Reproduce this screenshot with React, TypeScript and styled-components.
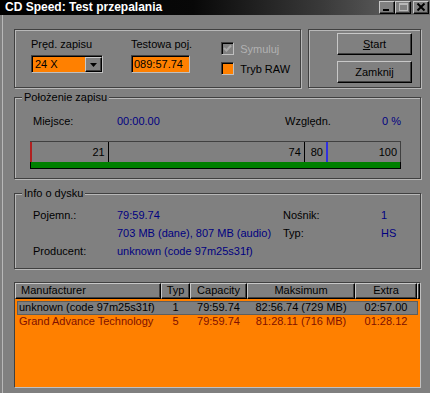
import styled, { createGlobalStyle } from 'styled-components';

const GlobalStyle = createGlobalStyle`
    html, body {
        margin: 0;
        padding: 0;
        background: #808080;
    }
    body {
        font-family: "Liberation Sans", Arial, sans-serif;
        font-size: 11px;
        color: #000;
    }
    * {
        box-sizing: border-box;
    }
`;

interface ScaleMark {
    value: number;
    blue?: boolean;
}

interface DiscRow {
    name: string;
    typ: string;
    capacity: string;
    max: string;
    extra: string;
    selected?: boolean;
}

const marks: ScaleMark[] = [
    { value: 21 },
    { value: 74 },
    { value: 80, blue: true },
    { value: 100 },
];

const discs: DiscRow[] = [
    {
        name: 'unknown (code 97m25s31f)',
        typ: '1',
        capacity: '79:59.74',
        max: '82:56.74 (729 MB)',
        extra: '02:57.00',
        selected: true,
    },
    {
        name: 'Grand Advance Technology',
        typ: '5',
        capacity: '79:59.74',
        max: '81:28.11 (716 MB)',
        extra: '01:28.12',
    },
];

const App = () => {
    return (
        <>
            <GlobalStyle />
            <Window>
                <TitleBar>
                    <Title>CD Speed: Test przepalania</Title>
                    <CaptionButtons>
                        <CaptionButton>
                            <svg width="10" height="9" viewBox="0 0 10 9">
                                <rect x="1" y="6" width="6" height="2" fill="#000" />
                            </svg>
                        </CaptionButton>
                        <CaptionButton>
                            <svg width="10" height="9" viewBox="0 0 10 9">
                                <rect x="1.5" y="0.5" width="8" height="7" fill="none" stroke="#b8b8b8" />
                                <rect x="1" y="1" width="9" height="1" fill="#b8b8b8" />
                            </svg>
                        </CaptionButton>
                        <CaptionButton $gap>
                            <svg width="10" height="9" viewBox="0 0 10 9">
                                <path d="M1.5 0.5 L8.5 7.5 M8.5 0.5 L1.5 7.5" stroke="#000" strokeWidth="2" />
                            </svg>
                        </CaptionButton>
                    </CaptionButtons>
                </TitleBar>
                <Body>
                    <TopRow>
                        <SettingsGroup>
                            <Field>
                                <FieldLabel>Pręd. zapisu</FieldLabel>
                                <Combo>
                                    <ComboText>24 X</ComboText>
                                    <ComboButton>
                                        <svg width="7" height="4" viewBox="0 0 7 4">
                                            <path d="M0 0 H7 L3.5 4 Z" fill="#000" />
                                        </svg>
                                    </ComboButton>
                                </Combo>
                            </Field>
                            <Field>
                                <FieldLabel>Testowa poj.</FieldLabel>
                                <TextBox>089:57.74</TextBox>
                            </Field>
                            <Checks>
                                <CheckRow $disabled>
                                    <CheckBox>
                                        <svg width="11" height="11" viewBox="0 0 11 11">
                                            <path d="M2 5 L4.5 7.5 L9 2.5" fill="none" stroke="#a8a8a8" strokeWidth="2" />
                                        </svg>
                                    </CheckBox>
                                    Symuluj
                                </CheckRow>
                                <CheckRow>
                                    <CheckBox $checked />
                                    Tryb RAW
                                </CheckRow>
                            </Checks>
                        </SettingsGroup>
                        <ActionsGroup>
                            <PushButton>
                                <u>S</u>tart
                            </PushButton>
                            <PushButton>Zamknij</PushButton>
                        </ActionsGroup>
                    </TopRow>

                    <PositionGroup>
                        <Legend>Położenie zapisu</Legend>
                        <InfoGrid $cols="84px 168px 97px 1fr" $row={14}>
                            <span>Miejsce:</span>
                            <Value>00:00.00</Value>
                            <span>Względn.</span>
                            <Value>0 %</Value>
                        </InfoGrid>
                        <Bar>
                            <Scale>
                                <StartMark />
                                {marks.map((m, i) => (
                                    <span key={`mark_${i}`}>
                                        <MarkLabel style={{ right: `calc(${100 - m.value}% + 3px)` }}>
                                            {m.value}
                                        </MarkLabel>
                                        {m.value < 100 && (
                                            <MarkLine $blue={m.blue} style={{ left: `${m.value}%` }} />
                                        )}
                                    </span>
                                ))}
                            </Scale>
                            <Track />
                        </Bar>
                    </PositionGroup>

                    <DiscGroup>
                        <Legend>Info o dysku</Legend>
                        <InfoGrid $cols="84px 166px 98px 1fr" $row={18}>
                            <span>Pojemn.:</span>
                            <Value>79:59.74</Value>
                            <span>Nośnik:</span>
                            <Value>1</Value>
                            <span />
                            <Value>703 MB (dane), 807 MB (audio)</Value>
                            <span>Typ:</span>
                            <Value>HS</Value>
                            <span>Producent:</span>
                            <Value>unknown (code 97m25s31f)</Value>
                        </InfoGrid>
                    </DiscGroup>

                    <ListView>
                        <ListHeader>
                            <HeaderCell $left>Manufacturer</HeaderCell>
                            <HeaderCell>Typ</HeaderCell>
                            <HeaderCell>Capacity</HeaderCell>
                            <HeaderCell>Maksimum</HeaderCell>
                            <HeaderCell>Extra</HeaderCell>
                            <HeaderCell />
                        </ListHeader>
                        <ListBody>
                            {discs.map((d, i) => (
                                <ListRow key={`disc_${i}`} $selected={d.selected}>
                                    <RowCell $left>{d.name}</RowCell>
                                    <RowCell>{d.typ}</RowCell>
                                    <RowCell>{d.capacity}</RowCell>
                                    <RowCell>{d.max}</RowCell>
                                    <RowCell>{d.extra}</RowCell>
                                </ListRow>
                            ))}
                        </ListBody>
                    </ListView>
                </Body>
            </Window>
        </>
    );
};

const Window = styled.div`
    width: 430px;
    height: 393px;
    overflow: hidden;
    background: #808080;
    display: flex;
    flex-direction: column;
`;

const TitleBar = styled.div`
    height: 15px;
    display: flex;
    align-items: flex-start;
    padding-left: 5px;
    background: linear-gradient(90deg, #000 0%, #080808 45%, #3a3a3a 75%, #6c6c6c 100%);
`;

const Title = styled.span`
    flex: 1;
    color: #fff;
    font-weight: bold;
    font-size: 12px;
    line-height: 15px;
`;

const CaptionButtons = styled.div`
    display: flex;
    padding: 1px 1px 0 0;
`;

const CaptionButton = styled.div<{ $gap?: boolean }>`
    width: 16px;
    height: 13px;
    margin-left: ${(p) => (p.$gap ? '2px' : '0')};
    background: #808080;
    border: 1px solid;
    border-color: #c8c8c8 #000 #000 #c8c8c8;
    box-shadow: inset -1px -1px 0 #404040;
    display: flex;
    align-items: center;
    justify-content: center;
`;

const Body = styled.div`
    flex: 1;
    margin-left: 2px;
    border-left: 1px solid #b8b8b8;
    padding: 14px 9px 0 11px;
    display: flex;
    flex-direction: column;
`;

const TopRow = styled.div`
    display: flex;
    gap: 7px;
    height: 59px;
`;

const GroupBox = styled.fieldset`
    margin: 0;
    min-width: 0;
    padding: 0;
    border: 1px solid #404040;
    box-shadow: inset 1px 1px 0 #b8b8b8, 1px 1px 0 #b8b8b8;
`;

const Legend = styled.legend`
    margin-left: 7px;
    padding: 0 2px;
    line-height: 13px;
    font-size: 11px;
    background: #808080;
`;

const SettingsGroup = styled(GroupBox)`
    width: 287px;
    display: flex;
    padding: 8px 0 0 16px;
`;

const Field = styled.div`
    display: flex;
    flex-direction: column;
    margin-right: 28px;
`;

const FieldLabel = styled.span`
    line-height: 13px;
    margin-bottom: 4px;
`;

const Sunken = styled.div`
    height: 18px;
    background: #ff8000;
    border: 1px solid;
    border-color: #404040 #c0c0c0 #c0c0c0 #404040;
    box-shadow: inset 1px 1px 0 #000;
`;

const Combo = styled(Sunken)`
    width: 72px;
    display: flex;
`;

const ComboText = styled.span`
    flex: 1;
    padding: 1px 0 0 3px;
    line-height: 15px;
`;

const ComboButton = styled.div`
    width: 17px;
    height: 15px;
    margin-top: 1px;
    background: #808080;
    border: 1px solid;
    border-color: #c8c8c8 #000 #000 #c8c8c8;
    box-shadow: inset -1px -1px 0 #404040;
    display: flex;
    align-items: center;
    justify-content: center;
`;

const TextBox = styled(Sunken)`
    width: 59px;
    padding: 1px 0 0 2px;
    line-height: 15px;
`;

const Checks = styled.div`
    display: flex;
    flex-direction: column;
    gap: 7px;
    padding-top: 4px;
    margin-left: 1px;
`;

const CheckRow = styled.div<{ $disabled?: boolean }>`
    display: flex;
    align-items: center;
    gap: 6px;
    height: 13px;
    color: ${(p) => (p.$disabled ? '#b2b2b2' : '#000')};
`;

const CheckBox = styled.div<{ $checked?: boolean }>`
    width: 13px;
    height: 13px;
    background: ${(p) => (p.$checked ? '#ff8000' : '#808080')};
    border: 1px solid;
    border-color: #404040 #c0c0c0 #c0c0c0 #404040;
    box-shadow: inset 1px 1px 0 #000;
    display: flex;
    align-items: center;
    justify-content: center;
`;

const ActionsGroup = styled(GroupBox)`
    flex: 1;
    display: flex;
    flex-direction: column;
    align-items: flex-end;
    gap: 6px;
    padding: 3px 8px 0 0;
`;

const PushButton = styled.button`
    width: 75px;
    height: 22px;
    padding: 0;
    background: #808080;
    font: inherit;
    font-size: 11px;
    color: #000;
    border: 1px solid;
    border-color: #c8c8c8 #000 #000 #c8c8c8;
    box-shadow: inset -1px -1px 0 #404040;
`;

const PositionGroup = styled(GroupBox)`
    margin-top: 3px;
    padding: 10px 0 9px 0;
`;

const DiscGroup = styled(GroupBox)`
    margin-top: 8px;
    padding: 6px 0 8px 0;
`;

const InfoGrid = styled.div<{ $cols: string; $row: number }>`
    display: grid;
    grid-template-columns: ${(p) => p.$cols};
    grid-auto-rows: ${(p) => p.$row}px;
    align-items: center;
    padding-left: 18px;
    white-space: nowrap;
`;

const Value = styled.span`
    color: #000080;
`;

const Bar = styled.div`
    width: 371px;
    margin: 13px 0 0 15px;
`;

const Scale = styled.div`
    position: relative;
    height: 21px;
    border-top: 1px solid #404040;
    border-right: 1px solid #404040;
`;

const StartMark = styled.div`
    position: absolute;
    left: 0;
    top: 0;
    bottom: 0;
    width: 2px;
    background: #b02020;
`;

const MarkLine = styled.div<{ $blue?: boolean }>`
    position: absolute;
    top: 0;
    bottom: 0;
    width: ${(p) => (p.$blue ? '2px' : '1px')};
    background: ${(p) => (p.$blue ? '#3030e0' : '#000')};
`;

const MarkLabel = styled.span`
    position: absolute;
    top: 0;
    line-height: 20px;
`;

const Track = styled.div`
    height: 7px;
    background: #008000;
    border: 1px solid #000;
    border-top: none;
`;

const ListView = styled.div`
    margin-top: 13px;
    height: 106px;
    display: flex;
    flex-direction: column;
    background: #ff8000;
    border: 1px solid;
    border-color: #404040 #c0c0c0 #c0c0c0 #404040;
`;

const ListHeader = styled.div`
    display: grid;
    grid-template-columns: 146px 29px 57px 108px 62px 1fr;
    height: 16px;
`;

const HeaderCell = styled.div<{ $left?: boolean }>`
    background: #808080;
    border: 1px solid;
    border-color: #c8c8c8 #000 #000 #c8c8c8;
    box-shadow: inset -1px -1px 0 #404040;
    line-height: 13px;
    text-align: ${(p) => (p.$left ? 'left' : 'center')};
    padding-left: ${(p) => (p.$left ? '5px' : '0')};
    white-space: nowrap;
    overflow: hidden;
`;

const ListBody = styled.div`
    flex: 1;
    padding: 2px;
`;

const ListRow = styled.div<{ $selected?: boolean }>`
    display: grid;
    grid-template-columns: 144px 29px 57px 108px 62px;
    height: 14px;
    line-height: 13px;
    color: ${(p) => (p.$selected ? '#000' : '#801000')};
    background: ${(p) => (p.$selected ? '#7e7e7e' : 'transparent')};
    box-shadow: ${(p) => (p.$selected ? 'inset 0 0 0 1px #5e5e5e' : 'none')};
`;

const RowCell = styled.span<{ $left?: boolean }>`
    text-align: ${(p) => (p.$left ? 'left' : 'center')};
    padding-left: ${(p) => (p.$left ? '2px' : '0')};
    white-space: nowrap;
`;

export default App;
